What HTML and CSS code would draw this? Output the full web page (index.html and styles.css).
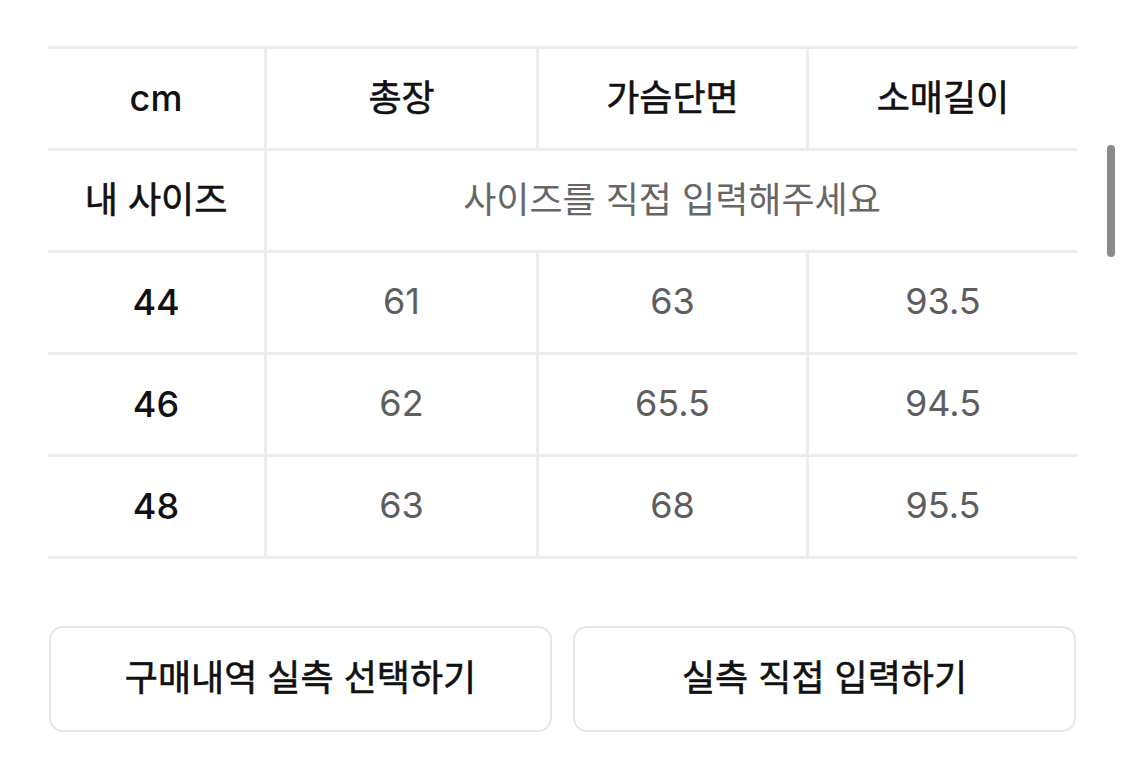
FILE: index.html
```html
<!DOCTYPE html>
<html lang="ko">
<head>
<meta charset="utf-8">
<title>사이즈 표</title>
<link rel="stylesheet" href="styles.css">
</head>
<body>
<div class="page">
  <div class="size-table">
    <div class="cell first latin-cell"><span class="latin">cm</span></div>
    <div class="cell head">총장</div>
    <div class="cell head">가슴단면</div>
    <div class="cell head">소매길이</div>

    <div class="cell head first">내 사이즈</div>
    <div class="cell placeholder span3">사이즈를 직접 입력해주세요</div>

    <div class="cell first latin-cell"><span class="latin">44</span></div>
    <div class="cell value">61</div>
    <div class="cell value">63</div>
    <div class="cell value">93.5</div>

    <div class="cell first latin-cell"><span class="latin">46</span></div>
    <div class="cell value">62</div>
    <div class="cell value">65.5</div>
    <div class="cell value">94.5</div>

    <div class="cell first latin-cell"><span class="latin">48</span></div>
    <div class="cell value">63</div>
    <div class="cell value">68</div>
    <div class="cell value">95.5</div>
  </div>

  <div class="actions">
    <button class="btn">구매내역 실측 선택하기</button>
    <button class="btn">실측 직접 입력하기</button>
  </div>
</div>
<div class="scrollbar"></div>
</body>
</html>
```

FILE: styles.css
```css
html, body {
  margin: 0;
  padding: 0;
  background: #ffffff;
}
body {
  font-family: "Noto Sans CJK KR", "Noto Sans", sans-serif;
  color: #111111;
  width: 1125px;
  height: 772px;
  overflow: hidden;
  position: relative;
}
.page {
  padding: 46px 0 0 48px;
}
.size-table {
  width: 1029px;
  display: grid;
  grid-template-columns: 216px 272px 270px 271px;
  border-top: 3px solid #ececec;
}
.cell {
  height: 95px;
  padding-bottom: 4px;
  border-bottom: 3px solid #ececec;
  border-left: 3px solid #ececec;
  display: flex;
  align-items: center;
  justify-content: center;
  font-size: 36px;
  letter-spacing: 0;
  box-sizing: content-box;
}
.cell.first {
  border-left: none;
}
.span3 {
  grid-column: 2 / 5;
}
.head {
  font-weight: 400;
  color: #111111;
  -webkit-text-stroke: 0.6px #111111;
  height: 92px;
  padding-bottom: 7px;
}
.placeholder {
  color: #666666;
  font-weight: 400;
  height: 92px;
  padding-bottom: 7px;
}
.latin-cell {
  height: 97px;
  padding-bottom: 2px;
}
.latin {
  font-family: Inter, "Liberation Sans", sans-serif;
  font-size: 36px;
  font-weight: 500;
  color: #111111;
}
.value {
  font-family: Inter, "Liberation Sans", sans-serif;
  font-weight: 400;
  color: #5e5e5e;
}
.actions {
  display: flex;
  gap: 21px;
  margin-top: 67px;
  padding-left: 1px;
}
.btn {
  width: 503px;
  height: 106px;
  background: #ffffff;
  border: 2px solid #e6e6e6;
  border-radius: 14px;
  font-family: "Noto Sans CJK KR", sans-serif;
  font-size: 36px;
  font-weight: 400;
  letter-spacing: 0;
  color: #111111;
  -webkit-text-stroke: 0.6px #111111;
  padding: 0 0 8px 0;
  box-sizing: border-box;
}
.scrollbar {
  position: absolute;
  left: 1107px;
  top: 145px;
  width: 8px;
  height: 112px;
  border-radius: 4px;
  background: #8a8a8a;
}
```
